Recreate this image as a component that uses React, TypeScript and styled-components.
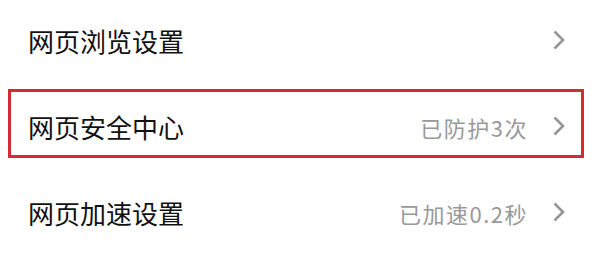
import React from 'react'
import styled, { createGlobalStyle } from 'styled-components'

type Item = {
    title: string
    value?: string
    highlighted?: boolean
}

const items: Item[] = [
    { title: '网页浏览设置' },
    { title: '网页安全中心', value: '已防护3次', highlighted: true },
    { title: '网页加速设置', value: '已加速0.2秒' },
]

export default function App(): JSX.Element {
    return (
        <>
            <GlobalStyle />
            <List>
                {items.map((item) => (
                    <Row key={item.title}>
                        <Title>{item.title}</Title>
                        <Trail>
                            {item.value && <Value>{item.value}</Value>}
                            <Chevron viewBox="0 0 12 20">
                                <polyline points="1.5,1.5 10,10 1.5,18.5" />
                            </Chevron>
                        </Trail>
                        {item.highlighted && <Highlight />}
                    </Row>
                ))}
            </List>
        </>
    )
}

const GlobalStyle = createGlobalStyle`
    html, body {
        margin: 0;
        padding: 0;
        background: #ffffff;
    }
    body {
        font-family: "Noto Sans CJK SC", "Noto Sans", sans-serif;
    }
`

const List = styled.div`
    display: flex;
    flex-direction: column;
    width: 600px;
    height: 262px;
    overflow: hidden;
    margin-top: -2px;
`

const Row = styled.div`
    position: relative;
    display: flex;
    align-items: center;
    justify-content: space-between;
    height: 86px;
    flex-shrink: 0;
    padding: 0 35px 0 28px;
    box-sizing: border-box;
`

const Title = styled.span`
    font-size: 26px;
    line-height: 1;
    color: #111111;
`

const Trail = styled.div`
    display: flex;
    align-items: center;
    gap: 25px;
`

const Value = styled.span`
    font-size: 22px;
    line-height: 1;
    color: #999999;
    letter-spacing: 1.5px;
`

const Chevron = styled.svg`
    width: 12px;
    height: 20px;
    fill: none;
    stroke: #959595;
    stroke-width: 2.6;
    margin-top: -2px;
`

const Highlight = styled.div`
    position: absolute;
    top: 5px;
    bottom: 12px;
    left: 8px;
    right: 16px;
    border: 3px solid #d42a30;
    pointer-events: none;
`
